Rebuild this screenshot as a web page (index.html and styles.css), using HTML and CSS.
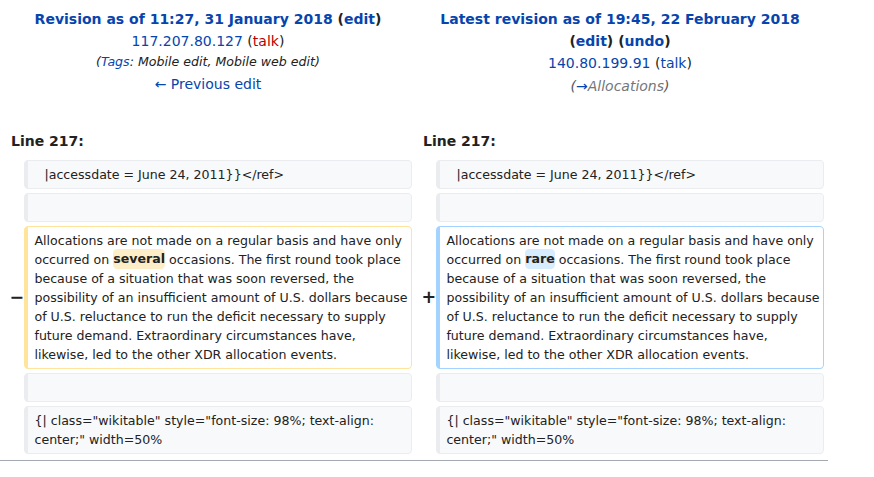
FILE: index.html
```html
<!DOCTYPE html>
<html lang="en">
<head>
<meta charset="utf-8">
<title>Diff</title>
<link rel="stylesheet" href="styles.css">
</head>
<body>
<div class="page">
<table class="diff">
  <colgroup>
    <col class="col-marker"><col class="col-content"><col class="col-marker"><col class="col-content">
  </colgroup>
  <tr class="title-row">
    <td colspan="2" class="diff-title">
      <div class="rev-title"><a href="#">Revision as of 11:27, 31 January 2018</a> <span class="paren">(<a href="#">edit</a>)</span></div>
      <div><a href="#">117.207.80.127</a> (<a href="#" class="new">talk</a>)</div>
      <div class="tags">(<a href="#">Tags</a>: Mobile edit, Mobile web edit)</div>
      <div><a href="#">← Previous edit</a></div>
    </td>
    <td colspan="2" class="diff-title">
      <div class="rev-title"><a href="#">Latest revision as of 19:45, 22 February 2018</a> <span class="paren">(<a href="#">edit</a>)</span> <span class="paren">(<a href="#">undo</a>)</span></div>
      <div><a href="#">140.80.199.91</a> (<a href="#">talk</a>)</div>
      <div class="comment">(<a href="#">→</a><span class="autocomment">Allocations</span>)</div>
      <div>&nbsp;</div>
    </td>
  </tr>
  <tr>
    <td colspan="2" class="lineno">Line 217:</td>
    <td colspan="2" class="lineno">Line 217:</td>
  </tr>
  <tr>
    <td class="marker"></td>
    <td class="cell context"><div class="indent">  |accessdate = June 24, 2011}}&lt;/ref&gt;</div></td>
    <td class="marker"></td>
    <td class="cell context"><div class="indent">  |accessdate = June 24, 2011}}&lt;/ref&gt;</div></td>
  </tr>
  <tr>
    <td class="marker"></td>
    <td class="cell context"><br></td>
    <td class="marker"></td>
    <td class="cell context"><br></td>
  </tr>
  <tr>
    <td class="marker"><span>−</span></td>
    <td class="cell deleted"><div>Allocations are not made on a regular basis and have only occurred on <del class="change">several</del> occasions. The first round took place because of a situation that was soon reversed, the possibility of an insufficient amount of U.S. dollars because of U.S. reluctance to run the deficit necessary to supply future demand. Extraordinary circumstances have, likewise, led to the other XDR allocation events.</div></td>
    <td class="marker"><span>+</span></td>
    <td class="cell added"><div>Allocations are not made on a regular basis and have only occurred on <ins class="change">rare</ins> occasions. The first round took place because of a situation that was soon reversed, the possibility of an insufficient amount of U.S. dollars because of U.S. reluctance to run the deficit necessary to supply future demand. Extraordinary circumstances have, likewise, led to the other XDR allocation events.</div></td>
  </tr>
  <tr>
    <td class="marker"></td>
    <td class="cell context"><br></td>
    <td class="marker"></td>
    <td class="cell context"><br></td>
  </tr>
  <tr>
    <td class="marker"></td>
    <td class="cell context"><div>{| class="wikitable" style="font-size: 98%; text-align: center;" width=50%</div></td>
    <td class="marker"></td>
    <td class="cell context"><div>{| class="wikitable" style="font-size: 98%; text-align: center;" width=50%</div></td>
  </tr>
</table>
<div class="diff-hr"></div>
</div>
</body>
</html>
```

FILE: styles.css
```css
html, body {
  margin: 0;
  padding: 0;
  background: #fff;
}
body {
  font-family: "DejaVu Sans", sans-serif;
  font-size: 14px;
  line-height: 1.6;
  color: #222;
}
.page {
  width: 828px;
}
a {
  color: #0645ad;
  text-decoration: none;
}
a.new {
  color: #ba0000;
}
.diff {
  width: 828px;
  table-layout: fixed;
  border-collapse: separate;
  border-spacing: 4px;
  margin: 0;
}
.col-marker {
  width: 2%;
}
.col-content {
  width: 48%;
}
.diff td {
  padding: 0.33em 0.5em;
}
.diff td.diff-title {
  text-align: center;
  vertical-align: top;
  padding: 3.6px 0.5em 1.6px;
}
.rev-title {
  font-weight: bold;
}
.tags {
  font-style: italic;
  font-size: 90%;
}
.comment {
  font-style: italic;
  color: #54595d;
}
.autocomment {
  color: #72777d;
}
.diff td.lineno {
  font-weight: bold;
  padding: 4.6px 0.5em 3.6px;
}
.diff td.marker {
  padding: 0;
  text-align: right;
  font-weight: bold;
  font-size: 1.25em;
  line-height: 1.2;
  vertical-align: middle;
}
.marker span {
  margin-right: -4px;
}
.diff td.cell {
  font-size: 12.6px;
  line-height: 19px;
  padding: 4px 0 4px 6.3px;
  border-style: solid;
  border-width: 1px 1px 1px 4px;
  border-radius: 0.33em;
  vertical-align: top;
  white-space: pre-wrap;
  word-wrap: break-word;
}
.indent {
  padding-left: 2px;
}
.context {
  background: #f8f9fa;
  border-color: #eaecf0;
  color: #222;
}
.deleted {
  border-color: #ffe49c;
}
.added {
  border-color: #a3d3ff;
}
.change {
  font-weight: bold;
  text-decoration: none;
  border-radius: 0.33em;
  padding: 2.3px 0;
}
.deleted .change {
  background: #feeec8;
}
.added .change {
  background: #d8ecff;
}
.diff-hr {
  border-top: 1px solid #a2a9b1;
  margin-top: 2px;
}
```
